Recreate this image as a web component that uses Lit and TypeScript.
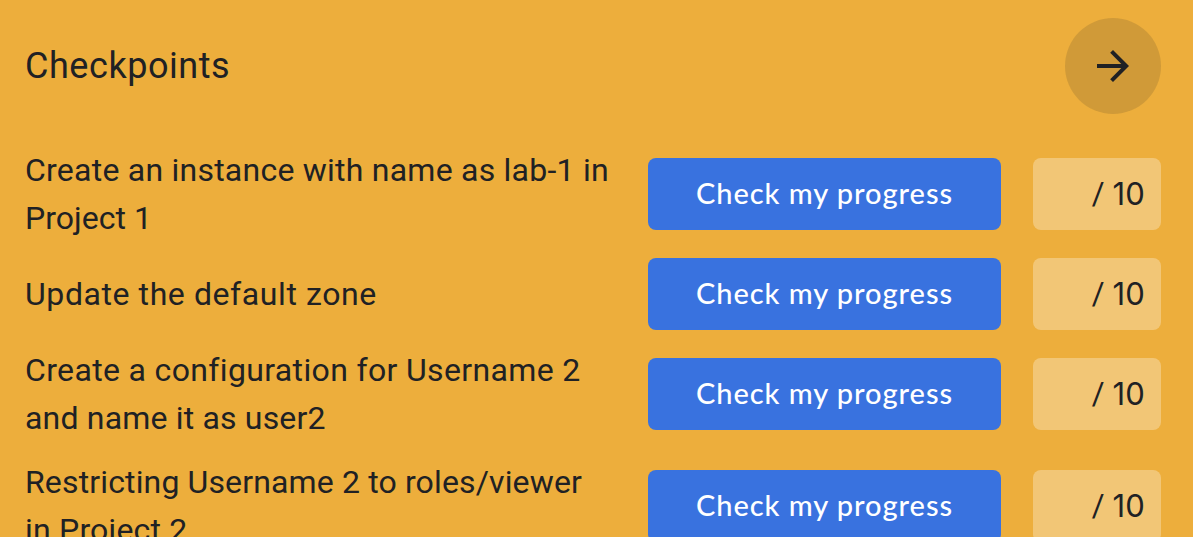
import { LitElement, html, css } from "lit";
import { customElement, property } from "lit/decorators.js";
import { styleMap } from "lit/directives/style-map.js";

interface Line {
  text: string;
  tracking: number;
}

interface Checkpoint {
  lines: Line[];
  max: number;
}

const CHECKPOINTS: Checkpoint[] = [
  {
    lines: [
      { text: "Create an instance with name as lab-1 in", tracking: 0.235 },
      { text: "Project 1", tracking: 0.03 },
    ],
    max: 10,
  },
  { lines: [{ text: "Update the default zone", tracking: 0.58 }], max: 10 },
  {
    lines: [
      { text: "Create a configuration for Username 2", tracking: 0.35 },
      { text: "and name it as user2", tracking: 0.18 },
    ],
    max: 10,
  },
  {
    lines: [
      { text: "Restricting Username 2 to roles/viewer", tracking: 0.141 },
      { text: "in Project 2", tracking: 0.2 },
    ],
    max: 10,
  },
];

@customElement("checkpoint-row")
export class CheckpointRow extends LitElement {
  @property({ attribute: false }) item!: Checkpoint;

  static styles = css`
    :host {
      display: grid;
      grid-template-columns: 1fr 353px 128px;
      column-gap: 32px;
      align-items: center;
    }
    .label {
      font-size: 32px;
      line-height: 48px;
      white-space: nowrap;
    }
    .line {
      display: block;
    }
    .check {
      box-sizing: border-box;
      height: 72px;
      padding: 0 0 3px;
      border: 0;
      border-radius: 8px;
      background: #3972df;
      color: #fff;
      font: 500 29px/69px Lato, sans-serif;
      letter-spacing: 0.95px;
      text-align: center;
    }
    .score {
      display: flex;
      justify-content: flex-end;
      align-items: center;
      gap: 8px;
      box-sizing: border-box;
      height: 72px;
      padding-right: 16px;
      border-radius: 8px;
      background: rgba(255, 255, 255, 0.3);
      font: 31px/72px Inter, sans-serif;
    }
    .slash {
      font: 31px/70px Roboto, sans-serif;
    }
    .max {
      letter-spacing: 0.2px;
    }
  `;

  render() {
    return html`
      <div class="label">
        ${this.item.lines.map(
          (l) => html`<span class="line" style=${styleMap({ letterSpacing: `${l.tracking}px` })}>${l.text}</span>`
        )}
      </div>
      <button class="check">Check my progress</button>
      <div class="score"><span class="slash">/</span><span class="max">${this.item.max}</span></div>
    `;
  }
}

@customElement("app-root")
export class AppRoot extends LitElement {
  static styles = css`
    :host {
      display: block;
      box-sizing: border-box;
      height: 100vh;
      overflow: hidden;
      padding: 18px 32px 0 25px;
      background: #edae3c;
      color: #202124;
      font-family: Roboto, sans-serif;
    }
    .header {
      display: flex;
      justify-content: space-between;
      align-items: center;
      height: 96px;
      margin-bottom: 32px;
    }
    .title {
      margin: 0;
      font-size: 36px;
      font-weight: 400;
      line-height: 48px;
      letter-spacing: 0.55px;
    }
    .next {
      display: flex;
      align-items: center;
      justify-content: center;
      width: 96px;
      height: 96px;
      padding: 0;
      border: 0;
      border-radius: 50%;
      background: rgba(32, 33, 36, 0.14);
      color: #202124;
    }
    .arrow {
      width: 48px;
      height: 48px;
      fill: currentColor;
    }
    .list {
      display: flex;
      flex-direction: column;
      gap: 16px;
    }
  `;

  render() {
    return html`
      <header class="header">
        <h1 class="title">Checkpoints</h1>
        <button class="next" aria-label="Next">
          <svg class="arrow" viewBox="0 0 24 24">
            <path d="M12 4l-1.41 1.41L16.17 11H4v2h12.17l-5.58 5.59L12 20l8-8z" />
          </svg>
        </button>
      </header>
      <div class="list">
        ${CHECKPOINTS.map((c) => html`<checkpoint-row .item=${c}></checkpoint-row>`)}
      </div>
    `;
  }
}
